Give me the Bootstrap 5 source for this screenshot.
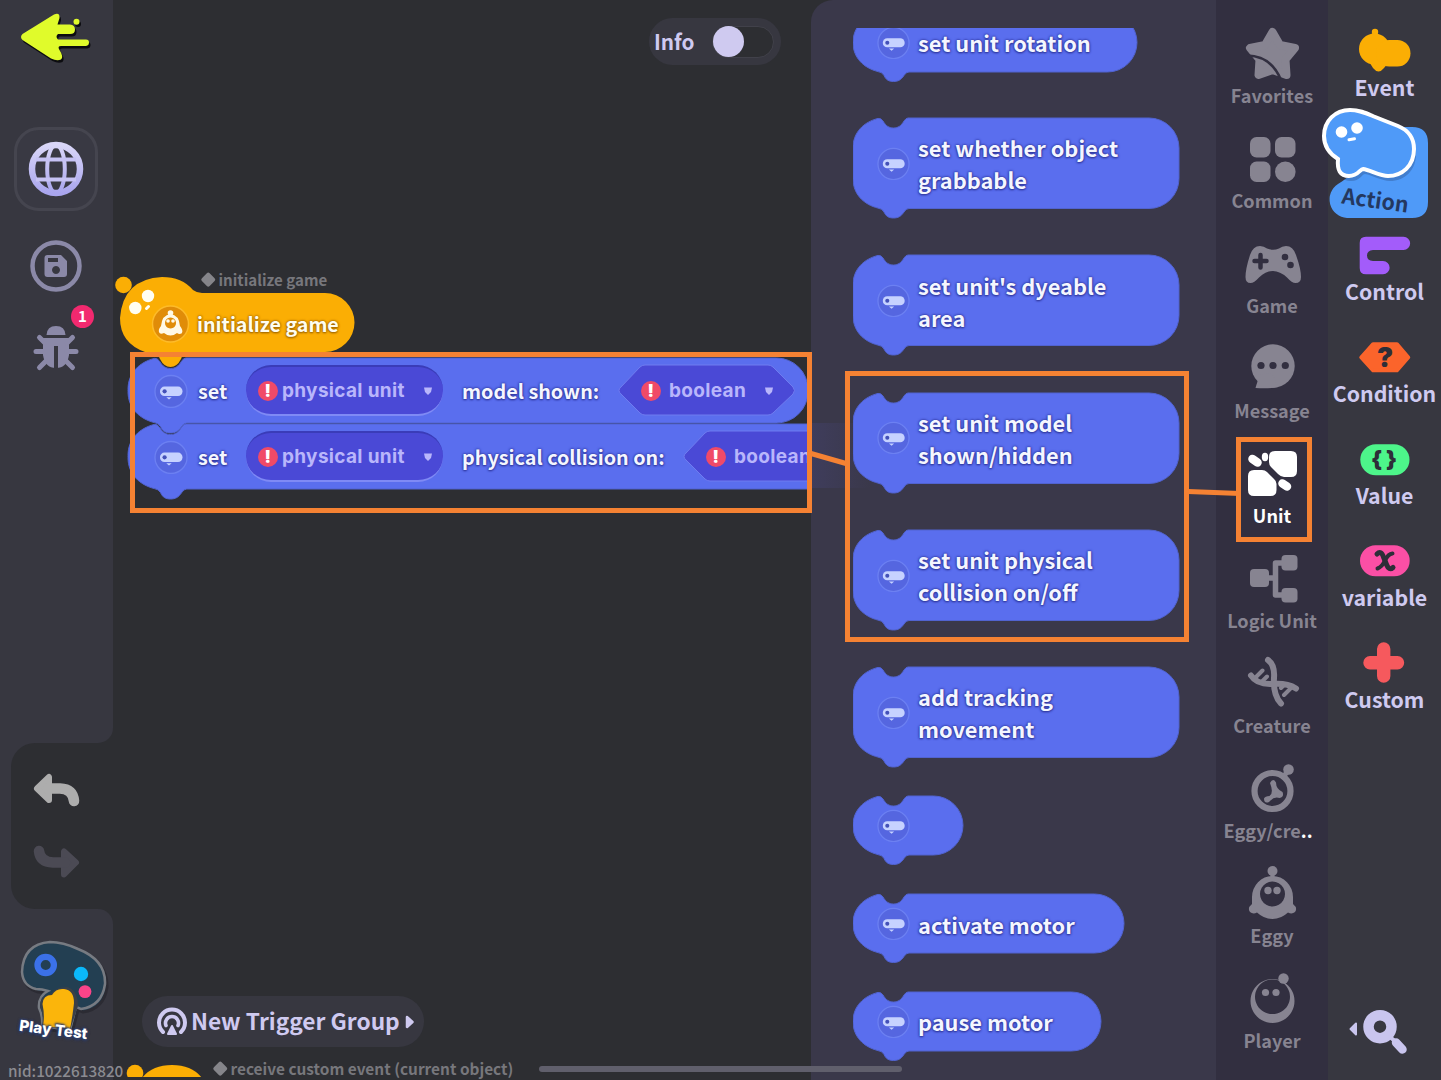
<!DOCTYPE html>
<html lang="en">
<head>
    <meta charset="UTF-8">
    <meta name="viewport" content="width=device-width, initial-scale=1.0">
    <title>Trigger Editor</title>
    <link href="https://cdn.jsdelivr.net/npm/bootstrap@5.3.3/dist/css/bootstrap.min.css" rel="stylesheet">
    <style>
        :root {
            --canvas: #2d2e32;
            --side: #373740;
            --drawer: #3a384a;
            --cats: #322f40;
            --lilac: #cfcaf0;
            --mute: #878491;
            --mark: #f58233;
        }

        body {
            width: 1441px;
            height: 1080px;
            overflow: hidden;
            background: var(--canvas);
            font-family: "Noto Sans CJK SC", "Noto Sans", sans-serif;
            font-weight: 700;
        }

        svg { display: block; flex: none; overflow: visible; }

        /* left tool bar */
        .tools { width: 113px; }
        .tools-top { height: 743px; background: var(--side); border-bottom-right-radius: 15px; padding-top: 8px; }
        .tools-mid { height: 166px; background: var(--side); padding-left: 11px; }
        .undo-box { height: 100%; background: var(--canvas); border-radius: 24px 0 0 24px; padding: 27px 0 0 20px; }
        .tools-end { background: var(--side); border-top-right-radius: 15px; padding: 29px 0 0 18px; }
        .globe-btn { width: 84px; height: 84px; margin: 59px 0 0 14px; border-radius: 25px; border: 3px solid #45454f; background: #393943; }
        .save-btn { margin: 29px 0 0 30px; }
        .bug-btn { margin: 31px 0 0 32px; width: 48px; }
        .count-dot { left: 39px; top: -18px; width: 23px; height: 23px; background: #f2296f; font-size: 15px; line-height: 22px; }
        .play-label { left: 1px; top: 80px; font: 800 15.3px/24px Inter, sans-serif; transform: rotate(7deg); text-shadow: 0 0 3px #2d3c68, 1px 1px 2px #2d3c68, -1px -1px 2px #2d3c68, 0 2px 3px #2d3c68; }
        .nid { left: -10px; top: 121px; font-size: 15.3px; line-height: 22px; font-weight: 500; color: #8b8b91; }

        /* canvas */
        .info-pill { left: 536px; top: 18px; width: 132px; height: 47px; background: var(--side); border-radius: 24px; padding-left: 5px; color: var(--lilac); font-size: 20.7px; }
        .info-track { width: 62px; height: 32px; border-radius: 16px; background: var(--canvas); border: 1px solid #41414a; margin-right: 7px; }
        .info-knob { width: 31px; height: 31px; background: var(--lilac); }
        .note { color: #77777c; font-size: 15.4px; line-height: 20px; }
        .note i { width: 10.5px; height: 10.5px; background: #85858a; border-radius: 2px; transform: rotate(45deg); margin-right: 1px; }
        .note-a { left: 90px; top: 269px; font-size: 15.1px; }
        .note-b { left: 102px; top: 1058px; }
        .event-node { left: 2px; top: 270px; width: 250px; height: 102px; }
        .event-text { left: 82px; top: 38px; color: #fffdf0; font-size: 19.7px; line-height: 32px; text-shadow: 0 0 3px #a56a00, 0 0 2px #a56a00, 0 1px 2px #a56a00; }
        .event-cut { left: 13px; top: 1060px; width: 90px; height: 17px; overflow: hidden; }
        .trigger-btn { left: 29px; top: 996px; width: 282px; height: 51px; border-radius: 26px; background: var(--side); color: var(--lilac); font-size: 22.7px; padding-left: 15px; }

        /* blocks */
        .blk { position: relative; color: #f4f6ff; text-shadow: 0 0 3px #3139a0, 0 0 2px #3139a0, 0 1px 2px #3139a0; }
        .blk > .shape { position: absolute; left: 0; top: 0; z-index: 0; }
        .blk > *:not(.shape) { position: relative; z-index: 1; }
        .stack { left: 15px; top: 358px; }
        .stack .blk { height: 65px; padding-left: 26px; font-size: 19.8px; margin-bottom: 1px; }
        .stack .one { width: 680px; }
        .stack .two { width: 745px; }
        .t-set { width: 48px; margin-left: 10px; }
        .t-shown { width: 156px; margin-left: 19px; }
        .t-coll { width: 221px; margin-left: 19px; }
        .slot { height: 51px; color: #b9b6fb; font: 700 19px/49px Inter, sans-serif; letter-spacing: .32px; text-shadow: none; }
        .slot-unit { width: 197px; border-radius: 25px; background: #4a49d6; border-bottom: 2px solid #7f8af5; border-top: 2px solid #3a3cb8; padding-left: 12px; }
        .slot-bool { width: 177px; padding-left: 23px; }
        .bang { width: 20px; height: 20px; background: #f04a68; border-radius: 50%; color: #fff; font: 900 17px/20px Inter, sans-serif; text-align: center; }

        .drawer { width: 405px; background: var(--drawer); border-top-left-radius: 22px; padding: 28px 0 0 42px; z-index: 2; }
        .drawer-list { overflow: hidden; height: 1040px; }
        .drawer .blk { font-size: 21.8px; line-height: 32px; padding-left: 24px; gap: 8px; }
        .drawer .blk > span { top: 1px; }
        .tall { width: 326px; height: 90.5px; margin-top: 46.7px; }
        .short { height: 59px; margin-top: 38.8px; }
        .drawer .first { width: 284px; margin-top: -15.5px; line-height: 26px; }
        .empty { width: 110px; }
        .activate { width: 271px; }
        .pause { width: 248px; }
        .ghost { left: 0; top: 423px; width: 60px; height: 65px; background: linear-gradient(90deg, #3f3d5c, #3a384a); }

        /* categories */
        .cats { width: 112px; background: var(--cats); padding-top: 22px; color: var(--mute); }
        .cat { height: 105px; font-size: 18.1px; line-height: 26px; }
        .cat svg { fill: var(--mute); margin-left: -1px; }
        .cat.on { color: #fff; }
        .cat.on svg { fill: #fff; }
        .kinds { width: 113px; background: var(--side); padding-top: 22px; color: var(--lilac); }
        .kind { height: 102px; font-size: 21.3px; line-height: 25px; white-space: nowrap; }
        .kind > svg:not(.action-art) { margin-left: -1.5px; }
        .kind text { fill: #2d2e38; font-family: Inter, sans-serif; font-weight: 900; }
        .action-art { left: -10px; top: -20px; }
        .action-text { left: 14px; top: 62px; color: #24385f; transform: rotate(8deg); }
        .find { left: 20px; top: 1004px; }

        .marks { left: 0; top: 0; pointer-events: none; z-index: 10; }
        .scroll-thumb { left: 539px; top: 1066px; width: 363px; height: 6px; border-radius: 3px; background: #605f6c; z-index: 3; }
    </style>
</head>
<body class="d-flex position-relative">
    <svg width="0" height="0" class="position-absolute">
        <defs>
            <linearGradient id="gGlobe" x1="0" y1="0" x2="0" y2="1">
                <stop offset="0" stop-color="#d9d6f8"/>
                <stop offset="1" stop-color="#a9a5ee"/>
            </linearGradient>
            <symbol id="unitIcon" viewBox="0 0 34 34">
                <circle cx="17" cy="17.500" r="16" fill="#5566e0" stroke="#6c80f2" stroke-width="1.300"/>
                <rect x="6" y="12.600" width="22.500" height="9.400" rx="4.500" fill="#c6d2ff"/>
                <circle cx="10.600" cy="17.300" r="2.100" fill="#4350b8"/>
                <path d="M12.300 23.200h5.400l-2.700 2.300z" fill="#c6d2ff"/>
            </symbol>
        </defs>
    </svg>

    <!-- Left tool bar -->
    <aside class="tools d-flex flex-column flex-shrink-0">
        <div class="tools-top">
            <svg width="98" height="60" viewBox="0 8 98 60">
                <path d="M22.500 34L54 14.500Q60 12 59.500 18L57.500 24.500H70Q75 25 75 29.500T70 34H58Q55 36.500 58 39.500H86Q89 39.500 89 42.500T86 46H61Q57 46 59.500 50Q64 57 61 59.500Q57 61.500 51 58.500L22.500 40Q19.500 37 22.500 34Z" fill="#0c0c10" transform="translate(1.500 2.500)"/>
                <circle cx="78" cy="24" r="3" fill="#0c0c10"/>
                <path d="M22.500 34L54 14.500Q60 12 59.500 18L57.500 24.500H70Q75 25 75 29.500T70 34H58Q55 36.500 58 39.500H86Q89 39.500 89 42.500T86 46H61Q57 46 59.500 50Q64 57 61 59.500Q57 61.500 51 58.500L22.500 40Q19.500 37 22.500 34Z" fill="#e0fb2b"/>
                <circle cx="76.500" cy="21.800" r="3" fill="#e0fb2b"/>
            </svg>
            <div class="globe-btn d-flex align-items-center justify-content-center">
                <svg width="56" height="56" viewBox="0 0 56 56" fill="none" stroke="url(#gGlobe)">
                    <circle cx="28" cy="28" r="24" stroke-width="6.500"/>
                    <ellipse cx="28" cy="28" rx="8.800" ry="24" stroke-width="4"/>
                    <path d="M8 18.500H48M8 38.500H48" stroke="#c6c2f4" stroke-width="4"/>
                </svg>
            </div>
            <svg class="save-btn" width="52" height="52" viewBox="0 0 52 52">
                <circle cx="26" cy="26" r="23.500" fill="none" stroke="#8b89a8" stroke-width="4.500"/>
                <path fill="#8b89a8" fill-rule="evenodd" d="M17.500 15H31L37 21V34Q37 37 34 37H17.500Q14.500 37 14.500 34V18Q14.500 15 17.500 15ZM18 18V22H28V18ZM26 26a4 4 0 1 0 .01 0Z"/>
            </svg>
            <div class="bug-btn position-relative">
                <svg width="48" height="50" viewBox="0 0 48 50" fill="#8b89a8" stroke="#8b89a8">
                    <path d="M14.500 12Q15 3 24 3T33.500 12Z" stroke="none"/>
                    <path d="M11 15H37V32Q35 45 24 45T11 32Z" stroke="none"/>
                    <path d="M13 20L7.500 14.500M35 20L40.500 14.500M13 28.500H4M35 28.500H44M14 38L7.500 44.500M34 38L40.500 44.500" fill="none" stroke-width="5" stroke-linecap="round"/>
                    <path d="M24 23V45" stroke="#373740" stroke-width="4"/>
                </svg>
                <span class="count-dot position-absolute rounded-circle text-white text-center">1</span>
            </div>
        </div>
        <div class="tools-mid">
            <div class="undo-box">
                <svg width="50" height="110" viewBox="31 770 50 110" stroke-linejoin="round" stroke-linecap="round">
                    <path d="M37 788.500L49 777V800Z" fill="#adadad" stroke="#adadad" stroke-width="6"/>
                    <path d="M48 788.500H60Q73 789 74 801" fill="none" stroke="#adadad" stroke-width="10.500"/>
                    <path d="M76 862.500L64 851.500V874.500Z" fill="#4b4a54" stroke="#4b4a54" stroke-width="6"/>
                    <path d="M65 862.500H53Q40 862 39 851" fill="none" stroke="#4b4a54" stroke-width="10.500"/>
                </svg>
            </div>
        </div>
        <div class="tools-end flex-grow-1">
            <div class="position-relative">
                <svg width="92" height="105" viewBox="0 0 92 105">
                    <path d="M32 4Q45 4 60 11Q88 22 87 46Q84 68 63 71L58 69Q55 80 52 92L24 88Q25 78 21 70Q20 58 30 53Q24 51 18 51Q5 48 4 34Q5 6 32 4Z" fill="#233f52" stroke="#2b2b33" stroke-width="3" transform="translate(2 3)"/>
                    <path d="M32 4Q45 4 60 11Q88 22 87 46Q84 68 63 71L58 69Q55 80 52 92L24 88Q25 78 21 70Q20 58 30 53Q24 51 18 51Q5 48 4 34Q5 6 32 4Z" fill="#233f52" stroke="#777b82" stroke-width="2.500"/>
                    <path d="M52 92L24 88Q26 78 22 68Q22 58 33 56Q38 49 49 49Q60 52 60 68Z" fill="#3a4048"/>
                    <path d="M25 88Q27 78 24.500 66Q25 57 34 57Q38 50 46 51Q56 52 56 65Q54 82 52 91Z" fill="#fbb50b"/>
                    <circle cx="27.700" cy="27" r="8.200" fill="none" stroke="#3b71e8" stroke-width="6.300"/>
                    <circle cx="63" cy="36" r="7.200" fill="#0bb8fa"/>
                    <circle cx="67" cy="53.600" r="6.400" fill="#fb4489"/>
                </svg>
                <span class="play-label position-absolute text-white text-nowrap">Play Test</span>
                <span class="nid position-absolute text-nowrap">nid:1022613820</span>
            </div>
        </div>
    </aside>

    <!-- Trigger canvas -->
    <main class="position-relative flex-grow-1">
        <div class="info-pill position-absolute d-flex align-items-center justify-content-between">
            <span>Info</span>
            <div class="info-track d-flex align-items-center"><div class="info-knob rounded-circle"></div></div>
        </div>

        <div class="note note-a position-absolute d-flex align-items-center gap-1"><i></i><span>initialize game</span></div>

        <div class="stack position-absolute">
            <div class="blk one d-flex align-items-center" data-k="1.05">
                <svg width="34" height="34"><use href="#unitIcon"/></svg>
                <span class="t-set">set</span>
                <div class="slot slot-unit d-flex align-items-center"><span class="bang">!</span><span class="ms-1">physical unit</span><svg class="ms-auto me-2" width="14" height="10"><path d="M3 1.500H11L10 6L7 9L4 6Z" fill="#b9b6fb"/></svg></div>
                <span class="t-shown text-nowrap">model shown:</span>
                <div class="slot slot-bool hexa d-flex align-items-center"><span class="bang">!</span><span class="ms-2">boolean</span><svg class="ms-auto me-3" width="14" height="10"><path d="M0 1.500H8L7 6L4 9L1 6Z" fill="#b9b6fb"/></svg></div>
            </div>
            <div class="blk two d-flex align-items-center" data-k="1.05">
                <svg width="34" height="34"><use href="#unitIcon"/></svg>
                <span class="t-set">set</span>
                <div class="slot slot-unit d-flex align-items-center"><span class="bang">!</span><span class="ms-1">physical unit</span><svg class="ms-auto me-2" width="14" height="10"><path d="M3 1.500H11L10 6L7 9L4 6Z" fill="#b9b6fb"/></svg></div>
                <span class="t-coll text-nowrap">physical collision on:</span>
                <div class="slot slot-bool hexa d-flex align-items-center"><span class="bang">!</span><span class="ms-2">boolean</span></div>
            </div>
        </div>

        <div class="event-node position-absolute">
            <svg width="250" height="102" viewBox="115 270 250 102">
                <circle cx="123.500" cy="285" r="8.300" fill="#fbae04"/>
                <path d="M162 277Q182 277 193 290Q197 293 202 293H325A29.500 29.500 0 0 1 325 352H186Q183 353 181 359Q177 367 170.500 367T160 359Q158 353 153 352H145Q120 343 120 318Q123 279 162 277Z" fill="#fbae04"/>
                <circle cx="148" cy="296" r="6.200" fill="#fffef2"/>
                <circle cx="135.300" cy="308" r="6.200" fill="#fffef2"/>
                <path d="M146.500 308.500L148.500 306.500" stroke="#fffef2" stroke-width="3" stroke-linecap="round"/>
                <circle cx="170.500" cy="324" r="18" fill="#e08c08" stroke="#fdbb2a" stroke-width="1.500"/>
                <circle cx="170.500" cy="313" r="2.800" fill="#fff9e6"/>
                <path fill="#fff9e6" fill-rule="evenodd" d="M170.500 314Q179 315 180 326Q184 331 181.500 333.500Q179 334.500 177 333Q170.500 338 164 333Q161 334.500 159.500 333Q157.500 330 161 326Q162 315 170.500 314ZM170.500 317.500a5.500 5.500 0 1 0 .01 0Z"/>
                <circle cx="168" cy="321" r="1.800" fill="#fff9e6"/>
                <circle cx="173" cy="321" r="1.800" fill="#fff9e6"/>
            </svg>
            <span class="event-text position-absolute text-nowrap">initialize game</span>
        </div>

        <button class="trigger-btn btn position-absolute d-flex align-items-center fw-bold border-0">
            <svg width="30" height="30" viewBox="0 0 30 30" fill="none" stroke="#cfcaf0" stroke-linecap="round">
                <path d="M6 25A13 13 0 1 1 24 25" stroke-width="4"/>
                <path d="M9 18.500A6.500 6.500 0 1 1 21 18.500" stroke-width="3.600"/>
                <path d="M15 19L19 27H11Z" fill="#cfcaf0" stroke-width="2" stroke-linejoin="round"/>
            </svg>
            <span class="ms-1 text-nowrap">New Trigger Group</span>
            <svg class="ms-1" width="10" height="16"><path d="M3 3L8.500 8L3 13Z" fill="#cfcaf0" stroke="#cfcaf0" stroke-width="2.500" stroke-linejoin="round"/></svg>
        </button>
        <div class="event-cut position-absolute">
            <svg width="90" height="40"><circle cx="9" cy="13" r="8.300" fill="#fbae04"/><path d="M16 18Q26 5 46 5T76 18Z" fill="#fbae04"/></svg>
        </div>
        <div class="note note-b position-absolute d-flex align-items-center gap-1"><i></i><span class="text-nowrap">receive custom event (current object)</span></div>
    </main>

    <!-- Block drawer -->
    <section class="drawer position-relative flex-shrink-0">
        <div class="ghost position-absolute"></div>
        <div class="drawer-list position-relative">
            <div class="blk short first d-flex align-items-center"><svg width="33" height="33"><use href="#unitIcon"/></svg><span>set unit rotation</span></div>
            <div class="blk tall d-flex align-items-center"><svg width="33" height="33"><use href="#unitIcon"/></svg><span>set whether object<br>grabbable</span></div>
            <div class="blk tall d-flex align-items-center"><svg width="33" height="33"><use href="#unitIcon"/></svg><span>set unit's dyeable<br>area</span></div>
            <div class="blk tall d-flex align-items-center"><svg width="33" height="33"><use href="#unitIcon"/></svg><span>set unit model<br>shown/hidden</span></div>
            <div class="blk tall d-flex align-items-center"><svg width="33" height="33"><use href="#unitIcon"/></svg><span>set unit physical<br>collision on/off</span></div>
            <div class="blk tall d-flex align-items-center"><svg width="33" height="33"><use href="#unitIcon"/></svg><span>add tracking<br>movement</span></div>
            <div class="blk short empty d-flex align-items-center"><svg width="33" height="33"><use href="#unitIcon"/></svg></div>
            <div class="blk short activate d-flex align-items-center"><svg width="33" height="33"><use href="#unitIcon"/></svg><span>activate motor</span></div>
            <div class="blk short pause d-flex align-items-center"><svg width="33" height="33"><use href="#unitIcon"/></svg><span>pause motor</span></div>
        </div>
    </section>

    <!-- Categories -->
    <nav class="cats flex-shrink-0">
        <div class="cat d-flex flex-column align-items-center">
            <svg width="60" height="60" viewBox="0 0 60 60"><path d="M30.500 10L38 23L53 26L43.500 37.500L44.500 53L30.500 48L16.500 53L17.500 37.500L8 26L23 23Z" stroke="#878491" stroke-width="8" stroke-linejoin="round"/><path d="M5 33.500Q29 34 38.500 57" fill="none" stroke="#322f40" stroke-width="2.600"/></svg>
            <span>Favorites</span>
        </div>
        <div class="cat d-flex flex-column align-items-center">
            <svg width="60" height="60"><rect x="8" y="10" width="20.500" height="20.500" rx="6.500"/><rect x="33" y="10" width="20.500" height="20.500" rx="6.500"/><rect x="8" y="34.500" width="20.500" height="20.500" rx="6.500"/><circle cx="43.300" cy="44.800" r="10.300"/></svg>
            <span>Common</span>
        </div>
        <div class="cat d-flex flex-column align-items-center">
            <svg width="60" height="60"><path d="M18 14Q22 14 25 16.500Q31 19 37 16.500Q40 14 44 14Q51 14 54 23Q59 37 59 45Q59 51 53.500 51Q50 51 45 45.500Q38 39 31 39T17 45.500Q12 51 8.500 51Q3.500 51 3.500 45Q3.500 37 8 23Q11 14 18 14Z"/><path d="M18.500 23V35.500M12.500 29H24.500" stroke="#322f40" stroke-width="4.500" stroke-linecap="round"/><circle cx="43" cy="25" r="3.300" fill="#322f40"/><circle cx="48.500" cy="33" r="3.300" fill="#322f40"/></svg>
            <span>Game</span>
        </div>
        <div class="cat d-flex flex-column align-items-center">
            <svg width="60" height="60"><circle cx="31" cy="29" r="21.700"/><path d="M13 38L16 43Q14 49 13.500 51Q26 52 36 50L30 36Z"/><g fill="#322f40"><circle cx="19" cy="28.500" r="3.600"/><circle cx="31" cy="28.500" r="3.600"/><circle cx="43.300" cy="28.500" r="3.600"/></g></svg>
            <span>Message</span>
        </div>
        <div class="cat on d-flex flex-column align-items-center">
            <svg width="60" height="60"><path d="M33 9H49Q55 9 55 15V29Q55 35 49 35H42Q39 35 36 32L29 25Q27 23 27 20V15Q27 9 33 9Z"/><path d="M12 28H20Q23 28 25 30L32 37Q34.500 39 34.500 42V48Q34.500 54 28.500 54H12Q6 54 6 48V34Q6 28 12 28Z"/><path d="M10.500 17L15.500 20.500M40.500 41.500L45 44.500" stroke="#fff" stroke-width="8.500" stroke-linecap="round"/><ellipse cx="23" cy="15" rx="3.200" ry="4.200"/></svg>
            <span>Unit</span>
        </div>
        <div class="cat d-flex flex-column align-items-center">
            <svg width="60" height="60"><rect x="8" y="22" width="19" height="18" rx="4"/><rect x="39.500" y="8" width="16" height="15.500" rx="4"/><rect x="39.500" y="41" width="16" height="14.500" rx="4"/><path d="M24 31H34M44 16H33.500V48H44" fill="none" stroke="#878491" stroke-width="5.500" stroke-linejoin="round"/></svg>
            <span>Logic Unit</span>
        </div>
        <div class="cat d-flex flex-column align-items-center">
            <svg width="60" height="60"><g fill="none" stroke="#878491" stroke-linecap="round"><path d="M26 8Q33 13 32 26Q31 43 39 51.500" stroke-width="6"/><path d="M9 23.500Q15 33 31 32Q45 31 54 36.500" stroke-width="6"/><path d="M14 25L20.500 18.500M20.500 29L25 24.500M39 36L43 32M42 43L49 36" stroke-width="4"/></g></svg>
            <span>Creature</span>
        </div>
        <div class="cat d-flex flex-column align-items-center">
            <svg width="60" height="60"><circle cx="30.500" cy="34" r="18" fill="none" stroke="#878491" stroke-width="6.200"/><circle cx="46.500" cy="12.500" r="5.300"/><path d="M41 20L46 14" stroke="#878491" stroke-width="5"/><path d="M28 26Q31 20.500 34 25.500Q34 32 40.500 35Q42.500 40 37.500 41Q32 39 27 45Q22 47 22 41.500Q23 39 27.500 39Q32 36 28 26Z"/></svg>
            <span class="pe-1 me-1">Eggy/cre<span class="text-white">..</span></span>
        </div>
        <div class="cat d-flex flex-column align-items-center">
            <svg width="60" height="60"><path fill-rule="evenodd" d="M30.500 14A20.500 21 0 0 1 51 35V42Q56 46 53 50Q50 52.500 46 50.500Q39 57 30.500 57T15 50.500Q11 52.500 8 50Q5 46 10 42V35A20.500 21 0 0 1 30.500 14ZM30.500 19.500a12.500 12.500 0 1 0 .01 0Z"/><circle cx="30.500" cy="9" r="5"/><path d="M30.500 9V16" stroke="#878491" stroke-width="4"/><circle cx="26" cy="28.500" r="3.700"/><circle cx="35" cy="28.500" r="3.700"/></svg>
            <span>Eggy</span>
        </div>
        <div class="cat d-flex flex-column align-items-center">
            <svg width="60" height="60"><path fill-rule="evenodd" d="M30.500 12a22 22 0 1 0 .01 0ZM30.500 12.500a17.500 17.300 0 1 1 -.01 0Z"/><circle cx="41.500" cy="11.500" r="5.200"/><circle cx="23.500" cy="25.500" r="3.600"/><circle cx="34" cy="25.500" r="3.600"/></svg>
            <span>Player</span>
        </div>
    </nav>

    <!-- Block kinds -->
    <nav class="kinds position-relative flex-shrink-0">
        <div class="kind d-flex flex-column align-items-center">
            <svg width="76" height="52" fill="#fbae04"><circle cx="28.500" cy="27" r="15.500"/><rect x="30" y="18" width="34.500" height="26.500" rx="13.200"/><circle cx="29" cy="10" r="3.200"/><path d="M22 38L27 46Q32.500 53 38 46L43 40Z"/></svg>
            <span>Event</span>
        </div>
        <div class="kind position-relative">
            <svg class="action-art position-absolute" width="120" height="120">
                <path d="M60 23H94Q110 23 110 39V98Q110 114 94 114H29A18.500 18.500 0 0 1 20 80Q30 74 45 60Z" fill="#4f9af8"/>
                <path d="M32 6C42 6 48 9 56 12.500L80 22C92 27 96 36 96 45C96 62 84 72 70 72C62 72 52 66 45 65C42 65 40 72 31 72C22 72 19 66 20 55C12 50 6 43 6 32C6 17 17 6 32 6Z" fill="#1d2c50" opacity=".25" transform="translate(2 5)"/>
                <path d="M32 6C42 6 48 9 56 12.500L80 22C92 27 96 36 96 45C96 62 84 72 70 72C62 72 52 66 45 65C42 65 40 72 31 72C22 72 19 66 20 55C12 50 6 43 6 32C6 17 17 6 32 6Z" fill="#4f9af8" stroke="#fff" stroke-width="4"/>
                <circle cx="23.500" cy="28" r="5.800" fill="#fff"/><circle cx="39" cy="24" r="5.800" fill="#fff"/>
                <path d="M31 35.800L36.500 34.800" stroke="#fff" stroke-width="3" stroke-linecap="round"/>
            </svg>
            <span class="action-text position-absolute">Action</span>
        </div>
        <div class="kind d-flex flex-column align-items-center">
            <svg width="76" height="52"><path d="M20 10.700H57.500A6.500 6.500 0 0 1 57.500 24H27Q21 24.500 21 29.500T27 35H37A6.500 6.500 0 0 1 37 48.300H20Q13.700 48.300 13.700 42V17Q13.700 10.700 20 10.700Z" fill="#a35cfa"/></svg>
            <span>Control</span>
        </div>
        <div class="kind d-flex flex-column align-items-center">
            <svg width="76" height="52"><path d="M27 16H51L62.500 29.300L51 42.500H27L15 29.300Z" fill="#fb642b" stroke="#fb642b" stroke-width="3.500" stroke-linejoin="round"/><text x="39" y="38.500" font-size="27" text-anchor="middle">?</text></svg>
            <span>Condition</span>
        </div>
        <div class="kind d-flex flex-column align-items-center">
            <svg width="76" height="52"><rect x="14.300" y="14.300" width="49.200" height="31" rx="15.500" fill="#4df58a"/><text x="40" y="36.500" font-size="22" text-anchor="middle" letter-spacing="4">{}</text></svg>
            <span>Value</span>
        </div>
        <div class="kind d-flex flex-column align-items-center">
            <svg width="76" height="52" fill="none" stroke="#2d2e38" stroke-linecap="round"><rect x="14" y="13.300" width="49.700" height="31" rx="15.500" fill="#fb4fa5" stroke="none"/><path d="M31 22Q35 18 37.500 25L40.500 32.500Q43 39 47 35.500" stroke-width="5"/><path d="M46.500 21.500Q42 22 39 28.500T31.500 36.500" stroke-width="4"/></svg>
            <span>variable</span>
        </div>
        <div class="kind d-flex flex-column align-items-center">
            <svg width="76" height="52"><path d="M37.700 15V42M24 28.700H51.500" stroke="#f6595d" stroke-width="13.400" stroke-linecap="round"/></svg>
            <span>Custom</span>
        </div>
        <svg class="find position-absolute" width="62" height="54" viewBox="1348 1004 62 54">
            <circle cx="1380" cy="1026.700" r="11.500" fill="none" stroke="#c9c5ee" stroke-width="10.500"/>
            <path d="M1390 1037L1396 1042" stroke="#c9c5ee" stroke-width="4"/>
            <path d="M1396 1042.500L1402.500 1049.500" stroke="#c9c5ee" stroke-width="8.500" stroke-linecap="round"/>
            <path d="M1350.500 1029L1356 1023.500V1034.500Z" fill="#c9c5ee" stroke="#c9c5ee" stroke-width="2" stroke-linejoin="round"/>
        </svg>
    </nav>

    <div class="scroll-thumb position-absolute"></div>

    <!-- Guide marks drawn over the editor -->
    <svg class="marks position-absolute" width="1441" height="1080" fill="none" stroke="#f58233" stroke-width="5">
        <rect x="132.500" y="354.500" width="677" height="156"/>
        <rect x="847.500" y="373.500" width="339" height="266"/>
        <rect x="1238.500" y="439.500" width="71" height="100"/>
        <path d="M811 453.500L846 463.500M1188 491.500L1240 493.500"/>
    </svg>

    <script src="https://cdn.jsdelivr.net/npm/bootstrap@5.3.3/dist/js/bootstrap.bundle.min.js"></script>
    <script>
        const NS = 'http://www.w3.org/2000/svg';

        // outline of a stackable block: notch on top, tab below
        function blockPath(w, h, k) {
            const r = Math.min(30 * k, h / 2);
            const x = n => (n * k).toFixed(1);
            const b = n => (h + n * k).toFixed(1);
            return `M0 ${r} C0 ${x(14)} ${x(11)} ${x(4)} ${x(25)} ${x(0.4)} Q${x(28)} 0 ${x(30)} ${x(3)}` +
                ` C${x(33)} ${x(8)} ${x(36)} ${x(10)} ${x(40.5)} ${x(10)} C${x(45)} ${x(10)} ${x(48)} ${x(8)} ${x(51)} ${x(3)} Q${x(53)} 0 ${x(55)} 0` +
                ` H${w - r} A${r} ${r} 0 0 1 ${w} ${r} V${h - r} A${r} ${r} 0 0 1 ${w - r} ${h} H${x(56)}` +
                ` Q${x(53)} ${b(0)} ${x(51)} ${b(3.5)} C${x(48)} ${b(8)} ${x(45)} ${b(9.5)} ${x(40.5)} ${b(9.5)}` +
                ` C${x(36)} ${b(9.5)} ${x(33)} ${b(8)} ${x(31)} ${b(3.5)} Q${x(29)} ${b(0)} ${x(25)} ${b(-0.4)}` +
                ` C${x(11)} ${b(-4)} 0 ${b(-14)} 0 ${h - r} Z`;
        }

        function addShape(el, d, fill, stroke) {
            const svg = document.createElementNS(NS, 'svg');
            const path = document.createElementNS(NS, 'path');
            svg.setAttribute('class', 'shape position-absolute top-0 start-0');
            svg.setAttribute('width', el.offsetWidth);
            svg.setAttribute('height', el.offsetHeight);
            path.setAttribute('d', d);
            path.setAttribute('fill', fill);
            path.setAttribute('stroke', stroke);
            svg.appendChild(path);
            el.prepend(svg);
        }

        document.querySelectorAll('.blk').forEach(el => {
            const k = parseFloat(el.dataset.k || 1);
            addShape(el, blockPath(el.offsetWidth, el.getBoundingClientRect().height, k), '#5a6eee', '#5163cf');
        });

        document.querySelectorAll('.hexa').forEach(el => {
            addShape(el, 'M27 0H150Q153 0 155 2L175 22Q178 25.500 175 29L155 48Q153 50 150 50H27Q24 50 22 48L3 29Q-1 25.500 3 22L22 2Q24 0 27 0Z', '#4a49d6', '#6f7cf0');
            [...el.children].slice(1).forEach(c => c.classList.add('position-relative'));
        });
    </script>
</body>
</html>
